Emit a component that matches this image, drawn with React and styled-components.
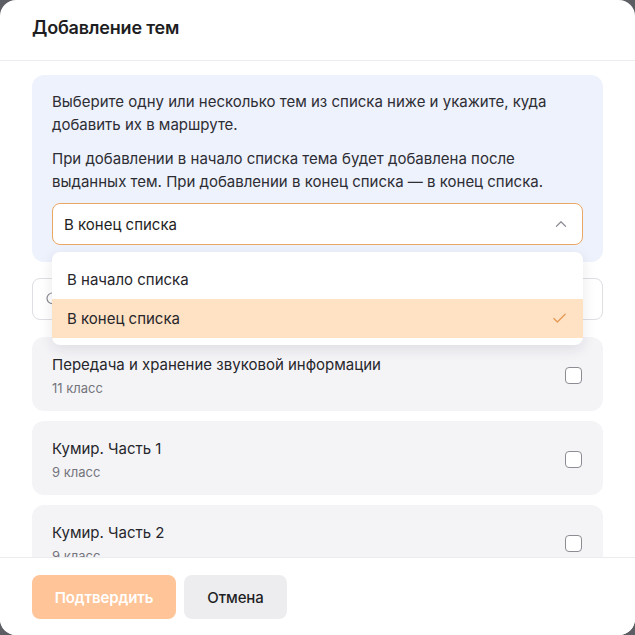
import React, { useState } from 'react'
import styled, { createGlobalStyle } from 'styled-components'
import { ChevronUp, Check, Search } from 'lucide-react'

const GlobalStyle = createGlobalStyle`
  html, body {
    margin: 0;
    padding: 0;
    background: #5d5d64;
  }
  * { box-sizing: border-box; }
  body {
    font-family: Inter, "Noto Sans", "Liberation Sans", sans-serif;
    color: #212126;
  }
`

const Modal = styled.div`
  width: 635px;
  height: 635px;
  background: #fff;
  border-radius: 16px;
  display: flex;
  flex-direction: column;
  overflow: hidden;
`

const Header = styled.div`
  height: 61px;
  flex-shrink: 0;
  display: flex;
  align-items: center;
  padding: 0 32px 6px;
  border-bottom: 1px solid #ececf0;
`

const Title = styled.h2`
  margin: 0;
  font-size: 18px;
  font-weight: 600;
  color: #1d1d22;
  letter-spacing: -0.2px;
`

const Body = styled.div`
  flex: 1;
  min-height: 0;
  overflow: hidden;
  padding: 14px 32px 0;
  display: flex;
  flex-direction: column;
`

const InfoBox = styled.div`
  flex-shrink: 0;
  background: #edf2fd;
  border-radius: 12px;
  padding: 15px 20px 17px;
  font-size: 15px;
  line-height: 23px;
  color: #2d2d33;
`

const Para = styled.p`
  margin: 0 0 ${p => (p.$last ? '0' : '11px')};
`

const SelectWrap = styled.div`
  position: relative;
  margin-top: 10px;
`

const SelectBox = styled.div`
  height: 42px;
  border: 1px solid #eba766;
  border-radius: 8px;
  background: #fff;
  display: flex;
  align-items: center;
  justify-content: space-between;
  padding: 0 12px 0 11px;
  font-size: 15px;
  color: #1f1f24;
`

const Menu = styled.div`
  position: absolute;
  left: 0;
  right: 0;
  top: 49px;
  z-index: 5;
  background: #fff;
  border-radius: 8px;
  padding: 8px 0 7px;
  box-shadow: 0 4px 14px rgba(30, 30, 50, 0.1);
`

const Option = styled.div`
  height: 39px;
  display: flex;
  align-items: center;
  justify-content: space-between;
  padding: 0 15px;
  font-size: 15px;
  color: #26262b;
  background: ${p => (p.$active ? '#ffe1c3' : 'transparent')};
`

const SearchBox = styled.div`
  flex-shrink: 0;
  margin-top: 16px;
  height: 42px;
  border: 1px solid #dedee3;
  border-radius: 8px;
  display: flex;
  align-items: center;
  padding: 0 12px;
  color: #8a8a92;
`

const List = styled.div`
  flex-shrink: 0;
  margin-top: 17px;
  display: flex;
  flex-direction: column;
  gap: 10px;
`

const Card = styled.div`
  background: #f4f4f7;
  border-radius: 12px;
  padding: 16px 20px 13px;
  display: flex;
  align-items: center;
  justify-content: space-between;
`

const CardText = styled.div`
  display: flex;
  flex-direction: column;
  gap: 1px;
`

const CardTitle = styled.div`
  font-size: 15px;
  line-height: 24px;
  color: #26262b;
`

const CardSub = styled.div`
  font-size: 13px;
  line-height: 20px;
  color: #74747c;
`

const Checkbox = styled.div`
  width: 17px;
  height: 17px;
  border: 1px solid #8c8c94;
  border-radius: 4px;
  background: #fff;
  margin-right: 1px;
`

const Footer = styled.div`
  flex-shrink: 0;
  border-top: 1px solid #ececf0;
  padding: 17px 32px 16px;
  display: flex;
  gap: 8px;
  background: #fff;
`

const Button = styled.button`
  height: 44px;
  width: ${p => (p.$primary ? '144px' : '103px')};
  border: none;
  border-radius: 8px;
  padding: 0;
  font-family: inherit;
  font-size: 15px;
  letter-spacing: -0.1px;
  font-weight: ${p => (p.$primary ? 600 : 500)};
  background: ${p => (p.$primary ? '#ffc497' : '#ededf0')};
  color: ${p => (p.$primary ? '#fff' : '#1f1f24')};
`

const topics = [
  { title: 'Передача и хранение звуковой информации', grade: '11 класс' },
  { title: 'Кумир. Часть 1', grade: '9 класс' },
  { title: 'Кумир. Часть 2', grade: '9 класс' },
]

export default function App() {
  const [place] = useState('end')

  return (
    <>
      <GlobalStyle />
      <Modal>
        <Header>
          <Title>Добавление тем</Title>
        </Header>
        <Body>
          <InfoBox>
            <Para>
              Выберите одну или несколько тем из списка ниже и укажите, куда
              добавить их в маршруте.
            </Para>
            <Para $last>
              При добавлении в начало списка тема будет добавлена после
              выданных тем. При добавлении в конец списка — в конец списка.
            </Para>
            <SelectWrap>
              <SelectBox>
                <span>В конец списка</span>
                <ChevronUp size={18} color="#8d8d95" strokeWidth={1.6} />
              </SelectBox>
              <Menu>
                <Option $active={place === 'start'}>В начало списка</Option>
                <Option $active={place === 'end'}>
                  В конец списка
                  <Check size={17} color="#e79a55" strokeWidth={1.8} />
                </Option>
              </Menu>
            </SelectWrap>
          </InfoBox>

          <SearchBox>
            <Search size={16} strokeWidth={1.8} />
          </SearchBox>

          <List>
            {topics.map(t => (
              <Card key={t.title}>
                <CardText>
                  <CardTitle>{t.title}</CardTitle>
                  <CardSub>{t.grade}</CardSub>
                </CardText>
                <Checkbox />
              </Card>
            ))}
          </List>
        </Body>
        <Footer>
          <Button $primary disabled>Подтвердить</Button>
          <Button>Отмена</Button>
        </Footer>
      </Modal>
    </>
  )
}
